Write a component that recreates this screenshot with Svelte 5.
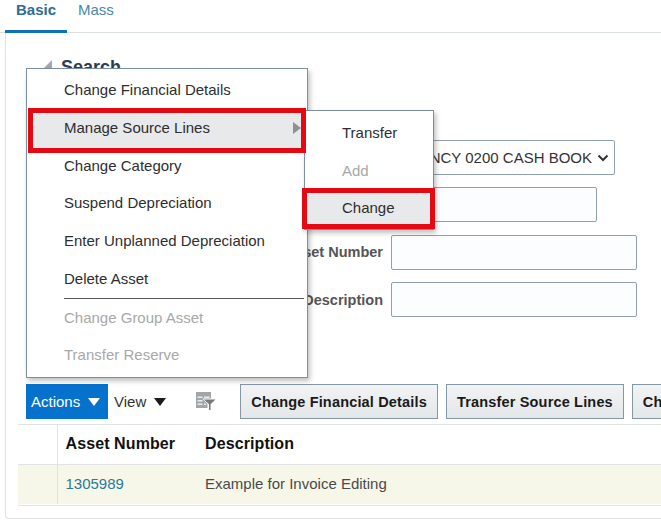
<script lang="ts">
  // Oracle-style asset search page with the Actions menu open.
  type MenuItem = { label: string; disabled?: boolean; marked?: boolean; more?: boolean; rule?: boolean }

  const menuItems: MenuItem[] = [
    { label: 'Change Financial Details' },
    { label: 'Manage Source Lines', marked: true, more: true },
    { label: 'Change Category' },
    { label: 'Suspend Depreciation' },
    { label: 'Enter Unplanned Depreciation' },
    { label: 'Delete Asset', rule: true },
    { label: 'Change Group Asset', disabled: true },
    { label: 'Transfer Reserve', disabled: true }
  ]
  const subItems: MenuItem[] = [
    { label: 'Transfer' },
    { label: 'Add', disabled: true },
    { label: 'Change', marked: true }
  ]
</script>

<div class="page">
  <nav class="tabs">
    <span class="tab active">Basic</span>
    <span class="tab">Mass</span>
  </nav>

  <section class="panel">
    <h2 class="search-title"><span class="twisty"></span>Search</h2>

    <div class="form">
      <span class="label"></span>
      <div class="field select"><span>AGENCY 0200 CASH BOOK</span>
        <svg width="12" height="8" viewBox="0 0 12 8"><path d="M1.500 1.500 6 6l4.500-4.500" fill="none" stroke="#333" stroke-width="2"/></svg>
      </div>
      <span class="label"></span>
      <div class="field short"></div>
      <span class="label">Asset Number</span>
      <div class="field"></div>
      <span class="label">Description</span>
      <div class="field"></div>
    </div>

    <div class="toolbar">
      <span class="actions">Actions <i class="caret white"></i></span>
      <span class="view">View <i class="caret"></i></span>
      <svg class="filter" width="21" height="19" viewBox="0 0 21 19">
        <path d="M0 0h15v16H0z" fill="#a3a6a9"/>
        <path d="M1.500 4.500h5v1.500h-5zM8 4.500h5.500v1.500H8zM1.500 8h5v1.500h-5zM1.500 11.500h5V13h-5zM8 11.500h2V13H8z" fill="#e9eaeb"/>
        <path d="M6.500 6.500h14l-5 5.500v7h-4v-7z" fill="#fff"/>
        <path d="M8 7.500h11.500l-5 4.800V18h-1.500v-5.700z" fill="#75797c"/>
      </svg>
      <button>Change Financial Details</button>
      <button>Transfer Source Lines</button>
      <button>Change Group Asset</button>
    </div>

    <div class="table">
      <div class="row head">
        <div class="gutter"></div>
        <div class="num">Asset Number</div>
        <div>Description</div>
      </div>
      <div class="row body">
        <div class="gutter"></div>
        <div class="num link">1305989</div>
        <div>Example for Invoice Editing</div>
      </div>
    </div>
  </section>

  <div class="menu main">
    {#each menuItems as item}
      <div class="item" class:disabled={item.disabled} class:marked={item.marked}>
        {item.label}
        {#if item.more}<i class="more"></i>{/if}
      </div>
      {#if item.rule}<div class="rule"></div>{/if}
    {/each}
  </div>

  <div class="menu sub">
    {#each subItems as item}
      <div class="item" class:disabled={item.disabled} class:marked={item.marked}>{item.label}</div>
    {/each}
  </div>
</div>

<style>
  :global(body) {
    background: #fff;
  }
  .page {
    position: relative;
    width: 661px;
    height: 525px;
    overflow: hidden;
    font-family: "Liberation Sans", Arial, sans-serif;
    font-size: 15px;
    color: #333;
  }
  .tabs {
    display: flex;
    height: 33px;
    box-sizing: border-box;
    padding-left: 5px;
    border-bottom: 1px solid #d9dee1;
  }
  .tab {
    padding: 2px 11px 0;
    height: 31px;
    box-sizing: border-box;
    font-size: 15px;
    line-height: 16px;
    color: #4c87a8;
  }
  .tab.active {
    width: 62px;
    font-weight: 700;
    color: #2a6d96;
    border-bottom: 3px solid #0d72b8;
    height: 33px;
  }
  .panel {
    margin-left: 5px;
    height: 486px;
    padding-top: 23px;
    box-sizing: border-box;
    border: 1px solid #dfe3e5;
    border-top: 0;
    border-right: 0;
    border-radius: 0 0 0 4px;
  }
  .search-title {
    display: flex;
    align-items: center;
    margin: 0 0 0 38px;
    height: 22px;
    font-size: 18px;
    font-weight: 700;
    color: #2c3e50;
  }
  .twisty {
    width: 0;
    height: 0;
    margin: -6px 9px 0 0;
    border-left: 8px solid transparent;
    border-bottom: 8px solid #a4a8ab;
  }
  .form {
    display: grid;
    grid-template-columns: 385px 246px;
    row-gap: 12.35px;
    margin-top: 62px;
    align-items: center;
  }
  .label {
    padding-right: 8px;
    text-align: right;
    font-weight: 700;
    font-size: 14.5px;
    color: #555;
  }
  .field {
    height: 35px;
    box-sizing: border-box;
    border: 1px solid #8fa0aa;
    border-radius: 2px;
    background: #fbfdfe;
  }
  .select {
    width: 224px;
    display: flex;
    align-items: center;
    justify-content: flex-end;
    gap: 5px;
    padding-right: 5px;
    background: #fff;
    white-space: nowrap;
  }
  .short {
    width: 206px;
  }
  .toolbar {
    display: flex;
    align-items: center;
    height: 35px;
    margin: 67px 0 0 20px;
    white-space: nowrap;
  }
  .actions {
    flex: none;
    display: flex;
    align-items: center;
    gap: 8px;
    box-sizing: border-box;
    width: 82px;
    height: 35px;
    padding-left: 5px;
    background: #0572ce;
    color: #fff;
  }
  .view {
    flex: none;
    display: flex;
    align-items: center;
    gap: 8px;
    margin-left: 6px;
  }
  .caret {
    width: 0;
    height: 0;
    border-left: 6px solid transparent;
    border-right: 6px solid transparent;
    border-top: 8px solid #1a1a1a;
  }
  .caret.white {
    border-top-color: #fff;
  }
  .filter {
    flex: none;
    margin: 0 23px 0 30px;
  }
  button {
    flex: none;
    height: 35px;
    margin-right: 8px;
    padding: 0 10px;
    border: 1px solid #8397a5;
    background: linear-gradient(#f1f3f4, #e4e7e9);
    font: 700 14.5px "Liberation Sans", Arial, sans-serif;
    letter-spacing: 0.17px;
    color: #1a1a1a;
  }
  .table {
    margin: 5px 0 0 12px;
    border-top: 1px solid #dfe3e5;
    border-bottom: 1px solid #dfe3e5;
  }
  .row {
    display: grid;
    grid-template-columns: 40px 147px 1fr;
    align-items: center;
    height: 39px;
  }
  .row > div {
    box-sizing: border-box;
    height: 100%;
    padding-bottom: 2px;
    display: flex;
    align-items: center;
  }
  .gutter {
    border-right: 1px solid #dfe3e5;
  }
  .row > .num {
    padding-left: 7.5px;
  }
  .head {
    font-weight: 700;
    font-size: 16px;
    letter-spacing: 0.1px;
    color: #111;
    border-bottom: 1px solid #dfe3e5;
  }
  .body {
    background: #f7f7e9;
    font-size: 15px;
    color: #4a4a4a;
    margin-bottom: 1px;
  }
  .link {
    color: #2a7a9c;
  }
  .menu {
    position: absolute;
    box-sizing: border-box;
    border: 1px solid #7b8f9c;
    background: #fff;
    box-shadow: 2px 3px 5px rgba(0, 0, 0, 0.25);
  }
  .main {
    left: 26px;
    top: 68px;
    width: 282px;
    height: 310px;
    padding-top: 2px;
  }
  .sub {
    left: 304px;
    top: 110px;
    width: 130px;
    height: 120px;
    padding-top: 3px;
  }
  .item {
    position: relative;
    display: flex;
    align-items: center;
    height: 37.6px;
    padding-left: 37px;
    color: #2e2e2e;
  }
  .disabled {
    color: #a8a8a8;
  }
  .marked {
    z-index: 3;
    box-sizing: border-box;
    height: 35px;
    margin: 4px 6px -1px;
    padding: 0 0 6px 31px;
    background: #e8e9eb;
    outline: 5px solid #e30a13;
  }
  .sub .marked {
    height: 31px;
    margin: 4px 3px 0 2px;
    padding: 0 0 3px 35px;
  }
  .more {
    position: absolute;
    right: 0;
    top: 9px;
    border-left: 8px solid #8d9295;
    border-top: 6px solid transparent;
    border-bottom: 6px solid transparent;
  }
  .rule {
    height: 1px;
    margin: 0.6px 3px 0 37px;
    background: #555;
  }
</style>
